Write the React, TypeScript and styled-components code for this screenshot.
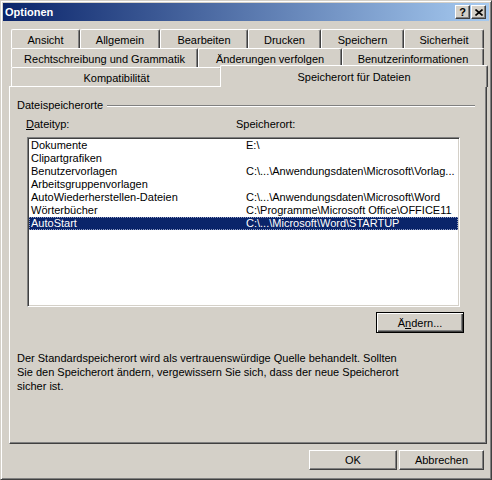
import React from "react";
import styled, { createGlobalStyle } from "styled-components";

const GlobalStyle = createGlobalStyle`
  html, body {
    margin: 0;
    padding: 0;
    background: #d4d0c8;
  }
  body {
    font-family: "Liberation Sans", Arial, sans-serif;
    font-size: 11px;
    color: #000;
  }
`;

const Window = styled.div`
  width: 492px;
  height: 480px;
  box-sizing: border-box;
  background: #d4d0c8;
  border: 1px solid;
  border-color: #d4d0c8 #404040 #404040 #d4d0c8;
  box-shadow: inset 1px 1px #fff, inset -1px -1px #808080;
  padding: 2px;
  display: flex;
  flex-direction: column;
`;

const TitleBar = styled.div`
  height: 18px;
  flex: none;
  display: flex;
  align-items: center;
  padding: 0 3px 0 2px;
  background: linear-gradient(to right, #0a246a, #a6caf0);
  color: #fff;
  font-weight: bold;
  font-size: 11px;
`;

const TitleText = styled.span`
  flex: 1;
`;

const CaptionButtons = styled.div`
  display: flex;
  gap: 1px;
`;

const CaptionButton = styled.div`
  width: 15px;
  height: 14px;
  box-sizing: border-box;
  background: #d4d0c8;
  border: 1px solid;
  border-color: #fff #404040 #404040 #fff;
  box-shadow: inset -1px -1px #808080;
  color: #000;
  display: flex;
  align-items: center;
  justify-content: center;
  font-size: 11px;
  font-weight: bold;
  line-height: 1;
`;

const Body = styled.div`
  flex: 1;
  display: flex;
  flex-direction: column;
  padding: 8px 5px 0 6px;
`;

const TabRow = styled.div`
  display: flex;
  align-items: flex-start;
  margin-left: 2px;
  height: 19px;
`;

const Tab = styled.div<{ $w: number; $selected?: boolean }>`
  width: ${(p) => p.$w + (p.$selected ? 4 : 0)}px;
  height: ${(p) => (p.$selected ? 22 : 19)}px;
  margin: ${(p) => (p.$selected ? "-2px -2px 0 -2px" : "0")};
  box-sizing: border-box;
  flex: none;
  position: relative;
  z-index: ${(p) => (p.$selected ? 1 : 0)};
  background: #d4d0c8;
  border-top: 1px solid #fff;
  border-left: 1px solid #fff;
  border-right: 1px solid #404040;
  box-shadow: inset -1px 0 #808080;
  border-radius: 2px 2px 0 0;
  text-align: center;
  line-height: 13px;
  padding-top: ${(p) => (p.$selected ? 5 : 4)}px;
  white-space: nowrap;
`;

const Panel = styled.div`
  width: 478px;
  height: 358px;
  box-sizing: border-box;
  border: 1px solid;
  border-color: #fff #404040 #404040 #fff;
  box-shadow: inset -1px -1px #808080;
  display: flex;
  flex-direction: column;
  flex: none;
`;

const GroupHeader = styled.div`
  display: flex;
  align-items: center;
  height: 13px;
  line-height: 13px;
  margin: 12px 11px 0 7px;
`;

const GroupLine = styled.div`
  flex: 1;
  margin-left: 4px;
  border-top: 1px solid #808080;
  border-bottom: 1px solid #fff;
  margin-top: 1px;
`;

const ColumnHeaders = styled.div`
  display: grid;
  grid-template-columns: 210px 1fr;
  height: 13px;
  line-height: 13px;
  margin: 6px 0 0 16px;
`;

const ListBox = styled.div`
  width: 433px;
  height: 170px;
  box-sizing: border-box;
  margin: 6px 0 0 17px;
  background: #fff;
  border: 1px solid;
  border-color: #808080 #fff #fff #808080;
  box-shadow: inset 1px 1px #404040, inset -1px -1px #d4d0c8;
  padding: 1px;
`;

const ListRow = styled.div<{ $selected?: boolean }>`
  display: grid;
  grid-template-columns: 215px 1fr;
  height: 13px;
  line-height: 13px;
  padding-left: 2px;
  white-space: nowrap;
  overflow: hidden;
  background: ${(p) => (p.$selected ? "#0a246a" : "transparent")};
  color: ${(p) => (p.$selected ? "#fff" : "#000")};
  outline: ${(p) => (p.$selected ? "1px dotted #8f9cc4" : "none")};
  outline-offset: -1px;
`;

const ActionRow = styled.div`
  display: flex;
  justify-content: flex-end;
  margin: 5px 22px 0 0;
`;

const Button = styled.div<{ $w: number; $default?: boolean }>`
  width: ${(p) => p.$w}px;
  height: ${(p) => (p.$default ? 21 : 20)}px;
  box-sizing: border-box;
  background: #d4d0c8;
  border: 1px solid;
  border-color: ${(p) => (p.$default ? "#000" : "#fff #404040 #404040 #fff")};
  box-shadow: ${(p) =>
    p.$default
      ? "inset 1px 1px #fff, inset -1px -1px #404040, inset -2px -2px #808080"
      : "inset -1px -1px #808080"};
  display: flex;
  align-items: center;
  justify-content: center;
`;

const Description = styled.div`
  margin: 18px 0 0 7px;
  line-height: 14px;
`;

const DialogButtons = styled.div`
  display: flex;
  justify-content: flex-end;
  gap: 2px;
  margin-top: 6px;
`;

const rows = [
  ["Dokumente", "E:\\"],
  ["Clipartgrafiken", ""],
  ["Benutzervorlagen", "C:\\...\\Anwendungsdaten\\Microsoft\\Vorlag..."],
  ["Arbeitsgruppenvorlagen", ""],
  ["AutoWiederherstellen-Dateien", "C:\\...\\Anwendungsdaten\\Microsoft\\Word"],
  ["Wörterbücher", "C:\\Programme\\Microsoft Office\\OFFICE11"],
  ["AutoStart", "C:\\...\\Microsoft\\Word\\STARTUP"],
];

const CloseIcon = () => (
  <svg width="8" height="7" viewBox="0 0 8 7">
    <path d="M0.5 0.5 L7.5 6.5 M7.5 0.5 L0.5 6.5" stroke="#000" strokeWidth="1.6" />
  </svg>
);

export default function App() {
  return (
    <>
      <GlobalStyle />
      <Window>
        <TitleBar>
          <TitleText>Optionen</TitleText>
          <CaptionButtons>
            <CaptionButton>?</CaptionButton>
            <CaptionButton>
              <CloseIcon />
            </CaptionButton>
          </CaptionButtons>
        </TitleBar>
        <Body>
          <TabRow>
            <Tab $w={69}>Ansicht</Tab>
            <Tab $w={80}>Allgemein</Tab>
            <Tab $w={88}>Bearbeiten</Tab>
            <Tab $w={73}>Drucken</Tab>
            <Tab $w={83}>Speichern</Tab>
            <Tab $w={80}>Sicherheit</Tab>
          </TabRow>
          <TabRow>
            <Tab $w={187}>Rechtschreibung und Grammatik</Tab>
            <Tab $w={144}>Änderungen verfolgen</Tab>
            <Tab $w={142}>Benutzerinformationen</Tab>
          </TabRow>
          <TabRow>
            <Tab $w={211}>Kompatibilität</Tab>
            <Tab $w={264} $selected>
              Speicherort für Dateien
            </Tab>
          </TabRow>
          <Panel>
            <GroupHeader>
              <span>Dateispeicherorte</span>
              <GroupLine />
            </GroupHeader>
            <ColumnHeaders>
              <span>
                <u>D</u>ateityp:
              </span>
              <span>Speicherort:</span>
            </ColumnHeaders>
            <ListBox>
              {rows.map(([type, path], i) => (
                <ListRow key={type} $selected={i === rows.length - 1}>
                  <span>{type}</span>
                  <span>{path}</span>
                </ListRow>
              ))}
            </ListBox>
            <ActionRow>
              <Button $w={88} $default>
                Ä<u>n</u>dern...
              </Button>
            </ActionRow>
            <Description>
              Der Standardspeicherort wird als vertrauenswürdige Quelle behandelt. Sollten
              <br />
              Sie den Speicherort ändern, vergewissern Sie sich, dass der neue Speicherort
              <br />
              sicher ist.
            </Description>
          </Panel>
          <DialogButtons>
            <Button $w={88}>OK</Button>
            <Button $w={85}>Abbrechen</Button>
          </DialogButtons>
        </Body>
      </Window>
    </>
  );
}
